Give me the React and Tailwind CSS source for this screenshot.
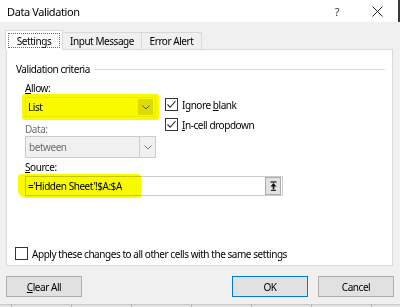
import React from 'react';

const Check = () => (
  <svg width="11" height="11" viewBox="0 0 11 11" className="block">
    <polyline points="1.5,5.5 4.2,8.3 9.5,2" fill="none" stroke="#222" strokeWidth="1.1" />
  </svg>
);

const Chevron = ({ color = '#444' }) => (
  <svg width="8" height="5" viewBox="0 0 8 5" className="block">
    <polyline points="0.5,0.5 4,4 7.5,0.5" fill="none" stroke={color} strokeWidth="1" />
  </svg>
);

const CheckBox = ({ checked }) => (
  <div className="w-[13px] h-[13px] border border-[#333] bg-white flex items-center justify-center shrink-0">
    {checked && <Check />}
  </div>
);

const Button = ({ children, primary, className = '' }) => (
  <div
    className={`h-[21px] w-[76px] flex items-center justify-center bg-[#e1e1e1] border ${
      primary ? 'border-[#0078d7]' : 'border-[#adadad]'
    } ${className}`}
  >
    {children}
  </div>
);

export default function App() {
  return (
    <div className="w-[400px] h-[307px] bg-[#f0f0f0] flex flex-col overflow-hidden font-['Noto_Sans',sans-serif] text-[10px] tracking-[-0.45px] text-black leading-none">
      {/* title bar */}
      <div className="h-[22px] shrink-0 bg-white flex items-center border-r-2 border-[#3a3a3a]">
        <span className="ml-[7px] text-[11px] tracking-[-0.4px]">Data Validation</span>
        <span className="ml-auto text-[11px] text-[#333]">?</span>
        <svg width="11" height="11" viewBox="0 0 11 11" className="ml-[33px] mr-[15px]">
          <path d="M0.5 0.5 L10.5 10.5 M10.5 0.5 L0.5 10.5" stroke="#222" strokeWidth="1" />
        </svg>
      </div>

      {/* tabs */}
      <div className="flex items-end ml-[5px] mt-[8px] relative z-10">
        <div className="w-[58px] h-[20px] bg-white border border-b-0 border-[#d9d9d9] flex items-start justify-center pt-[2px] -mb-px">
          <div className="w-[52px] h-[15px] border border-dotted border-[#666] flex items-center justify-center">
            Settings
          </div>
        </div>
        <div className="w-[79px] h-[17px] border border-l-0 border-b-0 border-[#d9d9d9] flex items-center justify-center">
          Input Message
        </div>
        <div className="w-[60px] h-[17px] border border-l-0 border-b-0 border-[#d9d9d9] flex items-center justify-center">
          Error Alert
        </div>
      </div>

      {/* panel */}
      <div className="ml-[6px] w-[387px] h-[217px] shrink-0 bg-white border border-[#d9d9d9] flex flex-col">
        <div className="mt-[12px] ml-[9px] mr-[7px] h-[14px] flex items-center">
          <span>Validation criteria</span>
          <div className="flex-1 h-px bg-[#dcdcdc] ml-[4px]" />
        </div>

        <div className="ml-[18px] flex">
          <div className="w-[131px]">
            <div className="mt-[6px] h-[12px] flex items-center">
              <span><span className="underline">A</span>llow:</span>
            </div>
            <div className="-mx-[3px] p-[3px] bg-[#f9f900] rounded-[3px]">
              <div className="h-[20px] flex items-center border border-[#eaea00]">
                <span className="ml-[2px]">List</span>
                <div className="ml-auto mr-[2px] w-[15px] h-[16px] bg-[#dcdc00] flex items-center justify-center">
                  <Chevron color="#555" />
                </div>
              </div>
            </div>
            <div className="mt-[3px] h-[12px] flex items-center text-[#6d6d6d]">Data:</div>
            <div className="mt-[1px] h-[22px] flex items-center bg-[#f0f0f0] border border-[#cccccc] text-[#6d6d6d]">
              <span className="ml-[3px]">between</span>
              <div className="ml-auto w-[16px] h-full border-l border-[#cccccc] flex items-center justify-center">
                <Chevron color="#777" />
              </div>
            </div>
            <div className="mt-[3px] h-[12px] flex items-center">
              <span><span className="underline">S</span>ource:</span>
            </div>
          </div>

          <div className="ml-[9px] mt-[22px] flex flex-col gap-[7px]">
            <div className="flex items-center gap-[4px]">
              <CheckBox checked />
              <span>Ignore <span className="underline">b</span>lank</span>
            </div>
            <div className="flex items-center gap-[4px]">
              <CheckBox checked />
              <span><span className="underline">I</span>n-cell dropdown</span>
            </div>
          </div>
        </div>

        {/* source input */}
        <div className="ml-[18px] mt-[3px] w-[258px] h-[20px] relative bg-white border border-[#cccccc] flex items-center">
          <div className="absolute left-[-8px] top-[-3px] w-[123px] h-[24px] bg-[#f9f900] rounded-[4px_3px_3px_8px] mix-blend-multiply" />
          <span className="ml-[2px] relative">='Hidden Sheet'!$A:$A</span>
          <div className="ml-auto mr-px w-[16px] h-[18px] bg-[#e1e1e1] border border-[#adadad] flex items-center justify-center">
            <svg width="7" height="10" viewBox="0 0 7 10">
              <path d="M0.5 1 H6.5" stroke="#111" strokeWidth="1.2" />
              <path d="M3.5 2 L6.5 5.5 H0.5 Z" fill="#111" />
              <path d="M3.5 5 V8.5" stroke="#111" strokeWidth="1.6" />
              <path d="M1 9.4 H6" stroke="#111" strokeWidth="1" />
            </svg>
          </div>
        </div>

        <div className="ml-[8px] mt-[51px] flex items-center gap-[4px]">
          <CheckBox />
          <span>Apply these changes to all other cells with the same settings</span>
        </div>
      </div>

      {/* buttons */}
      <div className="mt-[10px] mx-[6px] flex items-center">
        <Button><span><span className="underline">C</span>lear All</span></Button>
        <Button primary className="ml-auto w-[75px]">OK</Button>
        <Button className="ml-[10px] w-[75px]">Cancel</Button>
      </div>

      {/* sheet grid peeking below */}
      <div className="mt-auto h-[3px] border-t border-[#c6c6c6] bg-[#e3e3e3] flex">
        <div className="w-[12px] border-r border-[#b5b5b5]" />
        {[0, 1, 2, 3, 4, 5].map((i) => (
          <div key={i} className="w-[60px] border-r border-[#b5b5b5]" />
        ))}
      </div>
    </div>
  );
}
